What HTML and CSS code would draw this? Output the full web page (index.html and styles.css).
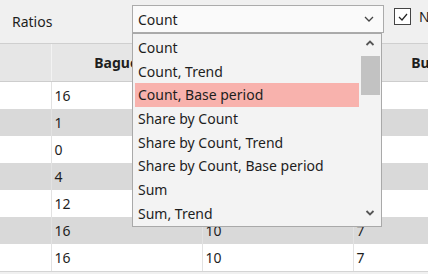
FILE: index.html
```html
<!DOCTYPE html>
<html lang="en">
<head>
    <meta charset="UTF-8">
    <title>Ratios</title>
    <link rel="stylesheet" href="styles.css">
</head>
<body>
    <div class="toolbar">
        <span class="label">Ratios</span>
        <div class="combo">
            <span>Count</span>
            <svg class="chev" width="10" height="6" viewBox="0 0 10 6"><path d="M1 1 L5 5 L9 1" fill="none" stroke="#444" stroke-width="1.3"/></svg>
        </div>
        <div class="check">
            <span class="box">
                <svg width="12" height="12" viewBox="0 0 12 12"><path d="M2 6 L5 9 L10 3" fill="none" stroke="#222" stroke-width="1.2"/></svg>
            </span>
            <span>N</span>
        </div>
    </div>

    <table class="grid">
        <colgroup>
            <col class="c0"><col class="c1"><col class="c2"><col class="c3">
        </colgroup>
        <thead>
            <tr><th></th><th>Baguette</th><th></th><th>Buns</th></tr>
        </thead>
        <tbody>
            <tr><td></td><td>16</td><td></td><td></td></tr>
            <tr class="alt"><td></td><td>1</td><td></td><td></td></tr>
            <tr><td></td><td>0</td><td></td><td></td></tr>
            <tr class="alt"><td></td><td>4</td><td></td><td></td></tr>
            <tr><td></td><td>12</td><td></td><td></td></tr>
            <tr class="alt"><td></td><td>16</td><td>10</td><td>7</td></tr>
            <tr><td></td><td>16</td><td>10</td><td>7</td></tr>
        </tbody>
    </table>

    <!-- open dropdown list of the Ratios combo -->
    <div class="popup">
        <ul class="items">
            <li>Count</li>
            <li>Count, Trend</li>
            <li class="hover">Count, Base period</li>
            <li>Share by Count</li>
            <li>Share by Count, Trend</li>
            <li>Share by Count, Base period</li>
            <li>Sum</li>
            <li>Sum, Trend</li>
        </ul>
        <div class="scrollbar">
            <svg class="up" width="10" height="6" viewBox="0 0 10 6"><path d="M1.5 5 L5 1.5 L8.5 5" fill="none" stroke="#555" stroke-width="1.8"/></svg>
            <div class="thumb"></div>
            <div class="track"></div>
            <svg class="down" width="10" height="6" viewBox="0 0 10 6"><path d="M1.5 1 L5 4.5 L8.5 1" fill="none" stroke="#555" stroke-width="1.8"/></svg>
        </div>
    </div>
</body>
</html>
```

FILE: styles.css
```css
body {
    margin: 0;
    width: 428px;
    height: 274px;
    overflow: hidden;
    position: relative;
    background-color: #f0f0f0;
    font-family: "Noto Sans", "Open Sans", sans-serif;
    font-size: 14px;
    color: #1e1e1e;
}
.toolbar {
    display: flex;
    align-items: flex-start;
    height: 43px;
    background-color: #f0f0f0;
    border-bottom: 1px solid #cfcfcf;
}
.label {
    flex-shrink: 0;
    width: 120px;
    padding-left: 12px;
    line-height: 43px;
}
.combo {
    flex-shrink: 0;
    display: flex;
    align-items: center;
    justify-content: space-between;
    box-sizing: border-box;
    width: 252px;
    height: 28px;
    margin-top: 5px;
    padding: 0 9px 0 5px;
    background-color: #fafafa;
    border: 1px solid #ababab;
}
.check {
    flex-shrink: 0;
    display: flex;
    align-items: center;
    gap: 8px;
    margin-left: 10px;
    margin-top: 7px;
    white-space: nowrap;
}
.box {
    display: flex;
    align-items: center;
    justify-content: center;
    width: 15px;
    height: 15px;
    border: 1px solid #444;
    background-color: #fff;
}
.grid {
    border-collapse: collapse;
    table-layout: fixed;
    width: 504px;
    background-color: #fff;
}
.c0 { width: 51px; }
.c1, .c2, .c3 { width: 151px; }
.grid th {
    height: 37px;
    padding: 0;
    background-color: #e6e6e6;
    border-right: 1px solid #f3f3f3;
    border-bottom: 1px solid #cdcdcd;
    font-weight: bold;
    text-align: center;
}
.grid td {
    height: 27px;
    padding: 0 0 0 3px;
    border-right: 1px solid #e2e2e2;
    text-align: left;
}
.grid tr.alt td {
    background-color: #d9d9d9;
}
.grid tbody tr:last-child td {
    border-bottom: 1px solid #d4d4d4;
}
.popup {
    position: absolute;
    left: 132px;
    top: 33px;
    width: 250px;
    height: 194px;
    box-sizing: border-box;
    display: flex;
    background-color: #f3f3f3;
    border: 1px solid #a9a9a9;
}
.items {
    flex: 1;
    margin: 0;
    padding: 2px 0 0;
    list-style: none;
}
.items li {
    height: 23.7px;
    line-height: 23.7px;
    margin: 0 0 0 2px;
    padding-left: 3px;
    white-space: nowrap;
}
.items li.hover {
    background-color: #f8b2ad;
}
.scrollbar {
    width: 22px;
    display: flex;
    flex-direction: column;
    align-items: center;
}
.scrollbar .up {
    margin: 6px 0 10px;
}
.scrollbar .down {
    margin: 0 0 10px;
}
.thumb {
    width: 19px;
    height: 39px;
    background-color: #c2c2c2;
}
.track {
    flex: 1;
}
```
